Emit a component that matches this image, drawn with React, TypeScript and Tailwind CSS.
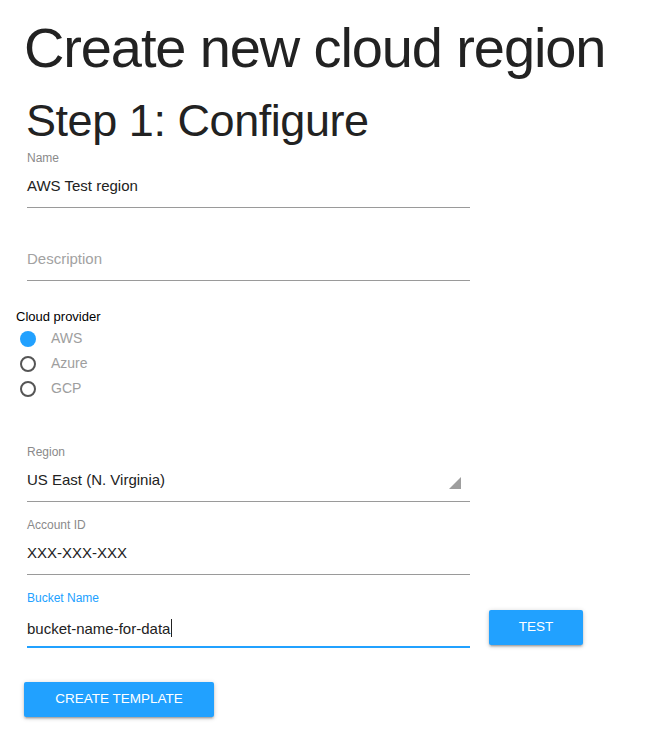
import React from "react";

const font = "font-['Liberation_Sans',Arial,Helvetica,sans-serif]";

type FieldProps = {
  label?: string;
  value?: string;
  placeholder?: string;
  focused?: boolean;
  select?: boolean;
};

const Field: React.FC<FieldProps> = ({ label, value, placeholder, focused, select }) => {
  return (
    <div className="ml-[11px] w-[443px]">
      <div
        className={`h-[14px] text-[12px] leading-[14px] ${
          focused ? "text-[#21a1ff]" : "text-[#8a8a8a]"
        }`}
      >
        {label}
      </div>
      <div
        className={`mt-[11px] flex items-end justify-between ${
          focused ? "border-b-2 border-[#21a1ff] pb-[11px]" : "border-b border-[#9a9a9a] pb-[12px]"
        }`}
      >
        <div className="h-[19px] text-[15px] leading-[19px]">
          {value ? (
            <span className="text-[#222]">
              {value}
              {focused && <span className="ml-px inline-block h-[18px] w-px translate-y-[3px] bg-[#222]" />}
            </span>
          ) : (
            <span className="text-[#a2a2a2]">{placeholder}</span>
          )}
        </div>
        {select && (
          <svg width="12" height="12" viewBox="0 0 12 12" className="mr-[9px]">
            <polygon points="12,0 12,12 0,12" fill="#9e9e9e" />
          </svg>
        )}
      </div>
    </div>
  );
};

const providers = [
  { name: "AWS", checked: true },
  { name: "Azure", checked: false },
  { name: "GCP", checked: false },
];

const App: React.FC = () => {
  return (
    <div className={`min-h-[734px] bg-white pl-[16px] pt-[11px] ${font}`}>
      {/* Headings */}
      <h1 className="ml-[8px] text-[56px] leading-[73px] tracking-[-0.02em] text-[#222]">
        Create new cloud region
      </h1>
      <h2 className="ml-[10px] mt-[13px] text-[45px] leading-[48px] tracking-[-0.01em] text-[#222]">
        Step 1: Configure
      </h2>

      {/* Name / Description */}
      <div className="mt-[6px] flex flex-col gap-[16px]">
        <Field label="Name" value="AWS Test region" />
        <Field placeholder="Description" />
      </div>

      {/* Cloud provider */}
      <div className="mt-[28px]">
        <div className="text-[13px] leading-[16px] text-black">Cloud provider</div>
        <div className="mt-px flex flex-col">
          {providers.map((p) => (
            <div key={p.name} className="flex h-[25px] items-center">
              {p.checked ? (
                <span className="ml-[4px] h-[16px] w-[16px] rounded-full bg-[#21a1ff]" />
              ) : (
                <span className="ml-[4px] h-[16px] w-[16px] rounded-full border-2 border-[#555]" />
              )}
              <span className="ml-[15px] text-[14px] leading-[25px] text-[#9e9e9e]">{p.name}</span>
            </div>
          ))}
        </div>
      </div>

      {/* Region / Account / Bucket */}
      <div className="mt-[44px] flex flex-col gap-[16px]">
        <Field label="Region" value="US East (N. Virginia)" select />
        <Field label="Account ID" value="XXX-XXX-XXX" />
        <div className="flex items-start">
          <Field label="Bucket Name" value="bucket-name-for-data" focused />
          <button className="ml-[19px] mt-[19px] h-[35px] w-[94px] rounded-[2px] bg-[#21a1ff] text-[13.5px] uppercase text-white shadow-[0_1px_5px_0_rgba(0,0,0,0.2),0_2px_2px_0_rgba(0,0,0,0.14),0_3px_1px_-2px_rgba(0,0,0,0.12)]">
            Test
          </button>
        </div>
      </div>

      <button className="ml-[8px] mt-[34px] h-[35px] w-[190px] rounded-[2px] bg-[#21a1ff] text-[13.5px] uppercase text-white shadow-[0_1px_5px_0_rgba(0,0,0,0.2),0_2px_2px_0_rgba(0,0,0,0.14),0_3px_1px_-2px_rgba(0,0,0,0.12)]">
        Create template
      </button>
    </div>
  );
};

export default App;
